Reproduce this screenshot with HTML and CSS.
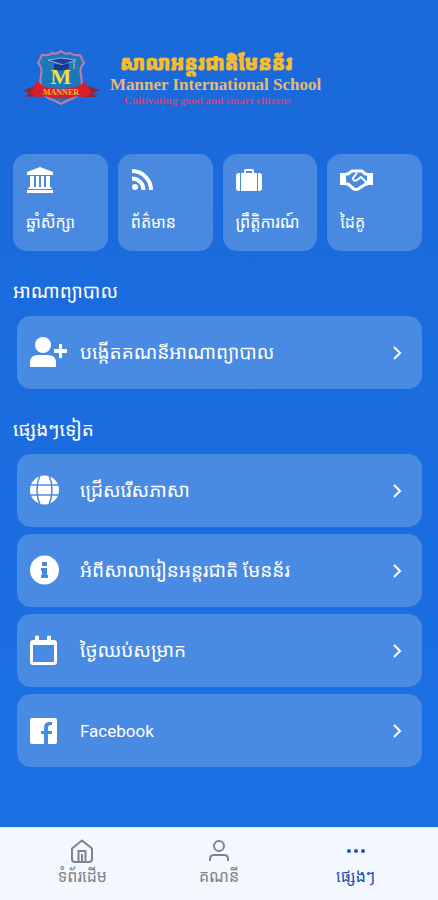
FILE: index.html
```html
<!DOCTYPE html>
<html lang="km">
<head>
<meta charset="utf-8">
<meta name="viewport" content="width=device-width, initial-scale=1">
<title>Manner International School</title>
<link rel="stylesheet" href="styles.css">
</head>
<body>
<header class="brand">
  <svg class="crest" viewBox="0 0 78 56" aria-hidden="true">
    <path d="m12 36-12 5 7 1-3 5 14-1zM66 36l12 4-7 3 4 4-15 0z" fill="#8e2736"/>
    <path d="M20 5q7 1 10-2 5 2 9-2 5 4 9 2 4 3 10 2l4 8q-5 5-3 12 3 17-7 23-6 2-13 6-7-4-13-6-10-6-7-23 2-7-3-12z" fill="#1c78bd" stroke="#c47ba6" stroke-width="2"/>
    <path d="m26 10 13-2 15 2-13 5z" fill="#1d3d9c" stroke="#8fb2dc" stroke-width="1"/>
    <path d="M32 14v5q8 4 15-1v-5l-7 2z" fill="#17368f"/>
    <path d="M52 11v8" stroke="#d7c35d" stroke-width="1"/>
    <text class="crest-letter" x="39" y="34" text-anchor="middle">M</text>
    <path d="m15 31 6 5q18 6 36 0l6-4 7 11q-9 6-14 3-17 5-34 0-6 3-14-2z" fill="#d51f2c"/>
    <text class="crest-band" x="39" y="45" text-anchor="middle">MANNER</text>
  </svg>
  <div class="brand-text">
    <div class="brand-khmer">សាលាអន្តរជាតិមែនន័រ</div>
    <div class="brand-name">Manner International School</div>
    <div class="brand-motto">Cultivating good and smart citizens</div>
  </div>
</header>

<main class="content">
  <nav class="tiles">
    <a class="tile" href="#">
      <svg viewBox="0 0 28 28" width="28" height="28" fill="currentColor" aria-hidden="true"><path d="M14 0 27 5v3H1V5zM4 9h4v11h2V9h3v11h2V9h3v11h2V9h4v11h1l1 2H2l1-2h1zM1 23h26v3H1z"/></svg>
      <span>ឆ្នាំសិក្សា</span>
    </a>
    <a class="tile" href="#">
      <svg viewBox="0 0 28 28" width="28" height="28" aria-hidden="true"><circle cx="4" cy="20" r="3" fill="currentColor"/><path d="M1 11.500a11.500 11.500 0 0 1 11.500 11.500M1 4a19 19 0 0 1 19 19" fill="none" stroke="currentColor" stroke-width="4"/></svg>
      <span>ព័ត៌មាន</span>
    </a>
    <a class="tile" href="#">
      <svg viewBox="0 0 28 28" width="28" height="28" fill="currentColor" aria-hidden="true"><path d="M3 6h1v18H3a3 3 0 0 1-3-3V9a3 3 0 0 1 3-3zM5 6h3V4q0-2 2-2h6q2 0 2 2v2h3v18H5zm5-2v2h6V4zM22 6h1a3 3 0 0 1 3 3v12a3 3 0 0 1-3 3h-1z"/></svg>
      <span>ព្រឹត្តិការណ៍</span>
    </a>
    <a class="tile" href="#">
      <svg viewBox="0 0 34 28" width="34" height="28" aria-hidden="true"><path d="M0 6h6v12H0zM27 6h6v12h-6z" fill="currentColor"/><path d="M6 7h2l4-3h10l3 3h2M6 17h2l6 5q2 1 4 0l8-5h2" fill="none" stroke="currentColor" stroke-width="3" stroke-linejoin="round"/><path d="m17 6-4 5q0 4 4 2l4-3 6 6" fill="none" stroke="currentColor" stroke-width="2" stroke-linejoin="round"/></svg>
      <span>ដៃគូ</span>
    </a>
  </nav>

  <section class="group">
    <h2>អាណាព្យាបាល</h2>
    <a class="row" href="#">
      <svg class="row-icon" viewBox="0 0 38 32" aria-hidden="true" fill="currentColor"><circle cx="13" cy="8" r="8"/><path d="M0 30v-4q0-8 8-8h10q8 0 8 8v4zM29 7h3v5h5v4h-5v5h-3v-5h-5v-4h5z"/></svg>
      <span>បង្កើតគណនីអាណាព្យាបាល</span>
      <svg class="chevron" viewBox="0 0 10 14" aria-hidden="true"><path d="m2 1 6 6-6 6"/></svg>
    </a>
  </section>

  <section class="group">
    <h2>ផ្សេងៗទៀត</h2>
    <a class="row" href="#">
      <svg class="row-icon" viewBox="0 0 38 32" aria-hidden="true"><circle cx="14.500" cy="15" r="14.500" fill="currentColor"/><path d="M0 10h29M0 20h29M10 0q-6 15 0 30M19 0q6 15 0 30" fill="none" stroke="#498ae3" stroke-width="1.500"/></svg>
      <span>ជ្រើសរើសភាសា</span>
      <svg class="chevron" viewBox="0 0 10 14" aria-hidden="true"><path d="m2 1 6 6-6 6"/></svg>
    </a>
    <a class="row" href="#">
      <svg class="row-icon" viewBox="0 0 38 32" aria-hidden="true"><circle cx="14.500" cy="15" r="14.500" fill="currentColor"/><path d="M12 7h5v4h-5zM11 13h6v7h1v3h-7v-3h1v-4h-1z" fill="#498ae3"/></svg>
      <span>អំពីសាលារៀនអន្តរជាតិ មែនន័រ</span>
      <svg class="chevron" viewBox="0 0 10 14" aria-hidden="true"><path d="m2 1 6 6-6 6"/></svg>
    </a>
    <a class="row" href="#">
      <svg class="row-icon" viewBox="0 0 38 32" aria-hidden="true" fill="currentColor"><path fill-rule="evenodd" d="M5 1q2-1 4 0v4h8V1q2-1 4 0v4h3a3 3 0 0 1 3 3v19a3 3 0 0 1-3 3H3a3 3 0 0 1-3-3V8a3 3 0 0 1 3-3h2zM3 10v17h21V10z"/></svg>
      <span>ថ្ងៃឈប់សម្រាក</span>
      <svg class="chevron" viewBox="0 0 10 14" aria-hidden="true"><path d="m2 1 6 6-6 6"/></svg>
    </a>
    <a class="row" href="#">
      <svg class="row-icon" viewBox="0 0 38 32" aria-hidden="true" fill="currentColor"><path d="M2 3h23q2 0 2 2v22q0 2-2 2h-7V19h4v-3h-4v-3q0-3 3-3h1V7h-3q-5 0-5 6v3h-3v3h3v10H2q-2 0-2-2V5q0-2 2-2z"/></svg>
      <span class="latin">Facebook</span>
      <svg class="chevron" viewBox="0 0 10 14" aria-hidden="true"><path d="m2 1 6 6-6 6"/></svg>
    </a>
  </section>
</main>

<nav class="tabs">
  <a class="tab" href="#">
    <svg viewBox="0 0 24 24" width="24" height="24" aria-hidden="true"><path d="M2 9.500 12 1.500l10 8V20q0 3-3 3H5q-3 0-3-3zM8.500 23V12h7v11M12 15v8"/></svg>
    <span>ទំព័រដើម</span>
  </a>
  <a class="tab" href="#">
    <svg viewBox="0 0 24 24" width="24" height="24" aria-hidden="true"><circle cx="12" cy="7" r="5"/><path d="M3 22v-2q0-4 4-4h10q4 0 4 4v2"/></svg>
    <span>គណនី</span>
  </a>
  <a class="tab active" href="#" aria-current="page">
    <svg viewBox="0 0 24 24" width="24" height="24" aria-hidden="true"><g fill="currentColor" stroke="none"><circle cx="5" cy="12" r="2"/><circle cx="12" cy="12" r="2"/><circle cx="19" cy="12" r="2"/></g></svg>
    <span>ផ្សេងៗ</span>
  </a>
</nav>
</body>
</html>
```
FILE: styles.css
```css
* { box-sizing: border-box; }

body {
  margin: 0;
  min-height: 100vh;
  display: flex;
  flex-direction: column;
  background: linear-gradient(#1a69d9, #1b70e6);
  color: #fff;
  font-family: Roboto, "Noto Sans Khmer", "Khmer OS", sans-serif;
}

a { color: inherit; text-decoration: none; }
svg { display: block; flex: none; }

.brand {
  display: flex;
  align-items: center;
  gap: 10px;
  padding: 50px 16px 0 22px;
}
.crest { width: 78px; height: 56px; overflow: visible; }
.crest-letter { font: bold 22px "Liberation Serif", serif; fill: #f7df3a; }
.crest-band { font: bold 8px "Liberation Serif", serif; fill: #f3b53c; }
.brand-text { white-space: nowrap; }
.brand-khmer {
  padding-left: 10px;
  font-size: 20px;
  font-weight: 700;
  line-height: 26px;
  color: #f5bd2e;
  -webkit-text-stroke: 1px #f5bd2e;
}
.brand-name { font: bold 17px/18px "Liberation Serif", serif; color: #e6b978; }
.brand-motto { padding-left: 14px; font: bold 11px/12px "Liberation Serif", serif; color: #d83e70; }

.content {
  flex: 1;
  padding: 48px 16px 58px 13px;
}

.tiles {
  display: grid;
  grid-template-columns: repeat(4, minmax(0, 1fr));
  gap: 10px;
}
.tile {
  height: 97px;
  padding: 13px;
  border-radius: 14px;
  background: #498ae0;
  font-size: 16px;
  line-height: 24px;
  white-space: nowrap;
}
.tile span { display: block; margin-top: 16px; }

.group { margin-top: 25px; }
h2 {
  margin: 0 0 8px;
  font-size: 19px;
  font-weight: 400;
  line-height: 32px;
}
.row {
  display: flex;
  align-items: center;
  height: 73px;
  margin: 0 0 7px 4px;
  padding: 0 20px 0 13px;
  border-radius: 14px;
  background: #498ae3;
  font-size: 19px;
  line-height: 28px;
}
.row:last-child { margin-bottom: 0; }
.row span { flex: 1; white-space: nowrap; }
.row .latin { font-size: 17px; }
.row-icon { width: 38px; height: 32px; margin-right: 12px; }
.chevron { width: 10px; height: 14px; fill: none; stroke: currentColor; stroke-width: 2; }

.tabs {
  position: sticky;
  bottom: 0;
  display: grid;
  grid-template-columns: repeat(3, 1fr);
  height: 73px;
  padding: 11px 14px 0;
  border-top: 1px solid #d9e8fb;
  background: #f3f8fe;
}
.tab {
  display: flex;
  flex-direction: column;
  align-items: center;
  gap: 2px;
  color: #7f838a;
  font-size: 16px;
  line-height: 24px;
}
.tab svg { fill: none; stroke: currentColor; stroke-width: 2; }
.active { color: #2453b8; }
```
